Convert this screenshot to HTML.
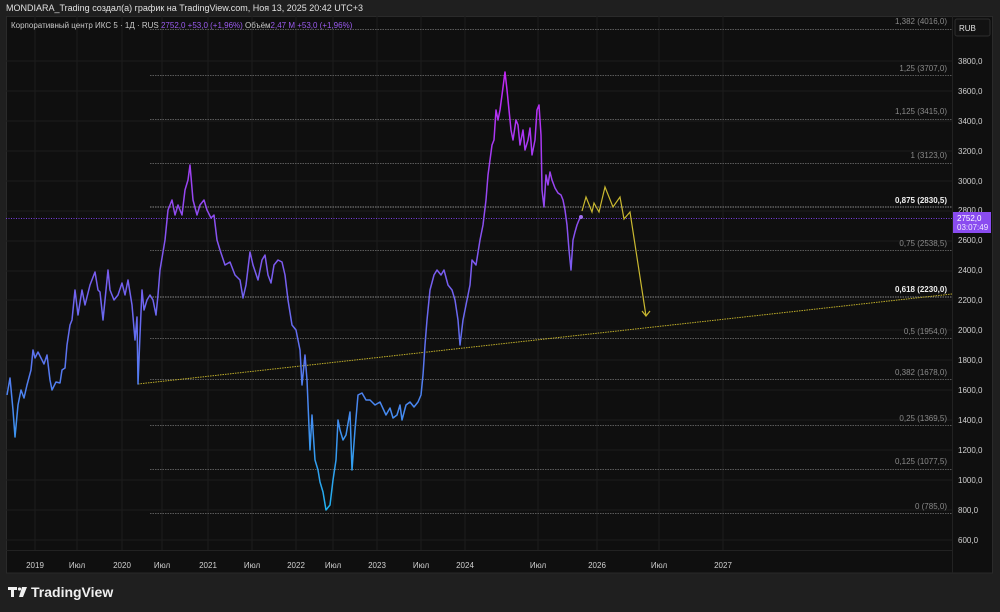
<!DOCTYPE html>
<html><head><meta charset="utf-8"><style>
html,body{margin:0;padding:0;background:#1f1f1f;width:1000px;height:612px;overflow:hidden}
svg{display:block;font-family:"Liberation Sans",sans-serif}
</style></head><body>
<svg width="1000" height="612" viewBox="0 0 1000 612" xmlns="http://www.w3.org/2000/svg">
<defs>
<linearGradient id="pg" gradientUnits="userSpaceOnUse" x1="0" y1="70" x2="0" y2="512">
<stop offset="0" stop-color="#c425f5"/>
<stop offset="0.35" stop-color="#8b4ff0"/>
<stop offset="0.65" stop-color="#5b74f0"/>
<stop offset="1" stop-color="#1fb2f0"/>
</linearGradient>
</defs>
<rect width="1000" height="612" fill="#1f1f1f"/>
<text x="6" y="11" font-size="9" fill="#e0e0e0">MONDIARA_Trading создал(а) график на TradingView.com, Ноя 13, 2025 20:42 UTC+3</text>
<rect x="6" y="16" width="987" height="557" fill="#0f0f0f"/>
<line x1="6" y1="16.5" x2="993" y2="16.5" stroke="#2a2a2a"/>
<line x1="6.5" y1="16" x2="6.5" y2="573" stroke="#2a2a2a"/>
<line x1="992.5" y1="16" x2="992.5" y2="573" stroke="#2a2a2a"/>
<line x1="6" y1="573" x2="993" y2="573" stroke="#2a2a2a"/>
<!-- grid -->
<g stroke="#1c1c1c" stroke-width="1">
<line x1="35" y1="16" x2="35" y2="550"/><line x1="77" y1="16" x2="77" y2="550"/><line x1="122" y1="16" x2="122" y2="550"/><line x1="162" y1="16" x2="162" y2="550"/><line x1="208" y1="16" x2="208" y2="550"/><line x1="252" y1="16" x2="252" y2="550"/><line x1="296" y1="16" x2="296" y2="550"/><line x1="333" y1="16" x2="333" y2="550"/><line x1="377" y1="16" x2="377" y2="550"/><line x1="421" y1="16" x2="421" y2="550"/><line x1="465" y1="16" x2="465" y2="550"/><line x1="538" y1="16" x2="538" y2="550"/><line x1="597" y1="16" x2="597" y2="550"/><line x1="659" y1="16" x2="659" y2="550"/><line x1="723" y1="16" x2="723" y2="550"/>
<line x1="6" y1="61" x2="952" y2="61"/><line x1="6" y1="91" x2="952" y2="91"/><line x1="6" y1="121" x2="952" y2="121"/><line x1="6" y1="151" x2="952" y2="151"/><line x1="6" y1="181" x2="952" y2="181"/><line x1="6" y1="211" x2="952" y2="211"/><line x1="6" y1="241" x2="952" y2="241"/><line x1="6" y1="271" x2="952" y2="271"/><line x1="6" y1="300" x2="952" y2="300"/><line x1="6" y1="330" x2="952" y2="330"/><line x1="6" y1="360" x2="952" y2="360"/><line x1="6" y1="390" x2="952" y2="390"/><line x1="6" y1="420" x2="952" y2="420"/><line x1="6" y1="450" x2="952" y2="450"/><line x1="6" y1="480" x2="952" y2="480"/><line x1="6" y1="510" x2="952" y2="510"/><line x1="6" y1="540" x2="952" y2="540"/>
</g>
<line x1="6" y1="550.5" x2="952" y2="550.5" stroke="#222"/>
<line x1="952.5" y1="16" x2="952.5" y2="573" stroke="#222"/>
<!-- fib lines -->
<g stroke="#5a5a5a" stroke-width="1" stroke-dasharray="1.5 1">
<line x1="150" y1="29.5" x2="952" y2="29.5"/><line x1="150" y1="75.5" x2="952" y2="75.5"/><line x1="150" y1="119.5" x2="952" y2="119.5"/><line x1="150" y1="163.5" x2="952" y2="163.5"/><line x1="150" y1="207" x2="952" y2="207" stroke="#888"/><line x1="150" y1="250.5" x2="952" y2="250.5"/><line x1="150" y1="297" x2="952" y2="297" stroke="#888"/><line x1="150" y1="338.5" x2="952" y2="338.5"/><line x1="150" y1="379.5" x2="952" y2="379.5"/><line x1="150" y1="425.5" x2="952" y2="425.5"/><line x1="150" y1="469.5" x2="952" y2="469.5"/><line x1="150" y1="513.5" x2="952" y2="513.5"/>
</g>
<g font-size="8" fill="#8a8a8a" text-anchor="end">
<text x="947" y="24">1,382 (4016,0)</text><text x="947" y="71">1,25 (3707,0)</text><text x="947" y="114">1,125 (3415,0)</text><text x="947" y="158">1 (3123,0)</text>
<text x="947" y="203" fill="#f0f0f0" font-weight="bold">0,875 (2830,5)</text>
<text x="947" y="246">0,75 (2538,5)</text>
<text x="947" y="292" fill="#f0f0f0" font-weight="bold">0,618 (2230,0)</text>
<text x="947" y="334">0,5 (1954,0)</text><text x="947" y="375">0,382 (1678,0)</text><text x="947" y="421">0,25 (1369,5)</text><text x="947" y="464">0,125 (1077,5)</text><text x="947" y="509">0 (785,0)</text>
</g>
<!-- current price line -->
<line x1="6" y1="218.5" x2="952" y2="218.5" stroke="#7a3de0" stroke-width="1" stroke-dasharray="1 1.5"/>
<!-- trend line -->
<line x1="138" y1="384" x2="952" y2="294" stroke="#bfae2a" stroke-width="1" stroke-dasharray="1.5 1"/>
<!-- price -->
<polyline fill="none" stroke="url(#pg)" stroke-width="1.5" stroke-linejoin="round" points="7,395 10,378 13,410 15,437 18,405 21,390 24,398 27,385 31,370 33,350 35,358 38,352 41,358 44,364 47,355 50,380 52,390 54,386 56,382 60,383 62,370 65,368 67,345 70,325 72,320 75,290 78,315 82,290 85,305 90,285 95,272 98,290 100,292 103,320 105,300 108,270 110,290 114,300 118,295 122,283 125,295 128,280 132,305 135,340 137,317 138,384 140,335 142,290 144,310 147,300 150,295 153,300 156,315 158,295 160,270 165,240 168,210 172,200 175,215 178,205 182,215 185,190 188,180 190,165 193,200 197,215 200,205 204,200 207,210 211,218 214,215 217,240 220,250 225,265 230,262 235,275 240,280 243,298 246,285 250,252 253,265 258,280 262,260 265,255 268,275 271,283 274,265 278,260 282,262 285,275 288,300 292,325 296,330 300,350 302,385 305,355 307,380 310,450 312,415 315,460 318,470 320,482 323,492 326,510 330,505 333,480 336,460 338,420 340,430 343,440 346,435 350,412 352,470 355,430 358,395 362,393 366,400 370,400 375,405 380,402 386,415 390,408 393,418 397,415 400,405 402,420 406,405 410,402 414,407 418,402 421,395 423,375 425,345 427,320 430,290 434,275 437,270 441,275 444,270 448,285 452,290 455,300 458,320 460,345 463,320 467,300 470,285 472,260 476,265 480,240 483,225 486,200 488,175 492,145 494,140 496,110 498,120 500,110 502,95 505,72 507,90 509,110 511,130 513,140 516,120 518,125 520,145 523,130 525,150 528,140 530,128 532,155 535,140 537,110 539,105 541,135 542,190 544,207 546,175 548,185 550,172 552,180 555,188 558,193 561,195 563,200 565,210 567,225 569,250 571,270 573,240 575,232 577,225 579,220 581,217"/>
<circle cx="581" cy="217" r="2" fill="#a070f0"/>
<!-- projection -->
<polyline fill="none" stroke="#c9b830" stroke-width="1.2" points="582,211 586,197 592,212 594,203 599,212 605,187 613,207 620,197 624,219 630,212 646,316"/>
<polyline fill="none" stroke="#c9b830" stroke-width="1.2" points="642,311 646,316 650,311"/>
<!-- price axis -->
<rect x="955" y="19" width="35" height="17" rx="2" fill="#121212" stroke="#2e2e2e"/>
<text x="959" y="31" font-size="8" fill="#e0e0e0">RUB</text>
<g font-size="8" fill="#d0d0d0">
<text x="958" y="64">3800,0</text><text x="958" y="94">3600,0</text><text x="958" y="124">3400,0</text><text x="958" y="154">3200,0</text><text x="958" y="184">3000,0</text><text x="958" y="213">2800,0</text><text x="958" y="273">2400,0</text><text x="958" y="303">2200,0</text><text x="958" y="333">2000,0</text><text x="958" y="363">1800,0</text><text x="958" y="393">1600,0</text><text x="958" y="423">1400,0</text><text x="958" y="453">1200,0</text><text x="958" y="483">1000,0</text><text x="958" y="513">800,0</text><text x="958" y="543">600,0</text><text x="958" y="243">2600,0</text>
</g>
<rect x="953" y="212" width="38" height="21" fill="#8a4cf0"/>
<text x="957" y="221" font-size="8" fill="#fff">2752,0</text>
<text x="957" y="230" font-size="8" fill="#f0e8ff">03:07:49</text>
<!-- legend -->
<text x="11" y="28" font-size="8" fill="#c8c8c8">Корпоративный центр ИКС 5 · 1Д · RUS <tspan fill="#9b5cf0">2752,0  +53,0 (+1,96%)</tspan>  Объём<tspan fill="#9b5cf0">2,47 M  +53,0 (+1,96%)</tspan></text>
<!-- time axis -->
<g font-size="8" fill="#d0d0d0" text-anchor="middle">
<text x="35" y="568">2019</text><text x="77" y="568">Июл</text><text x="122" y="568">2020</text><text x="162" y="568">Июл</text><text x="208" y="568">2021</text><text x="252" y="568">Июл</text><text x="296" y="568">2022</text><text x="333" y="568">Июл</text><text x="377" y="568">2023</text><text x="421" y="568">Июл</text><text x="465" y="568">2024</text><text x="538" y="568">Июл</text><text x="597" y="568">2026</text><text x="659" y="568">Июл</text><text x="723" y="568">2027</text>
</g>
<!-- logo -->
<g fill="#f0f0f0">
<path d="M8 587h9v3h-3v7h-3v-7h-3z"/>
<circle cx="19.5" cy="589" r="1.6"/>
<path d="M22 587h5l-4 10h-4z"/>
</g>
<text x="31" y="597" font-size="14" font-weight="bold" fill="#f0f0f0">TradingView</text>
</svg>
</body></html>
